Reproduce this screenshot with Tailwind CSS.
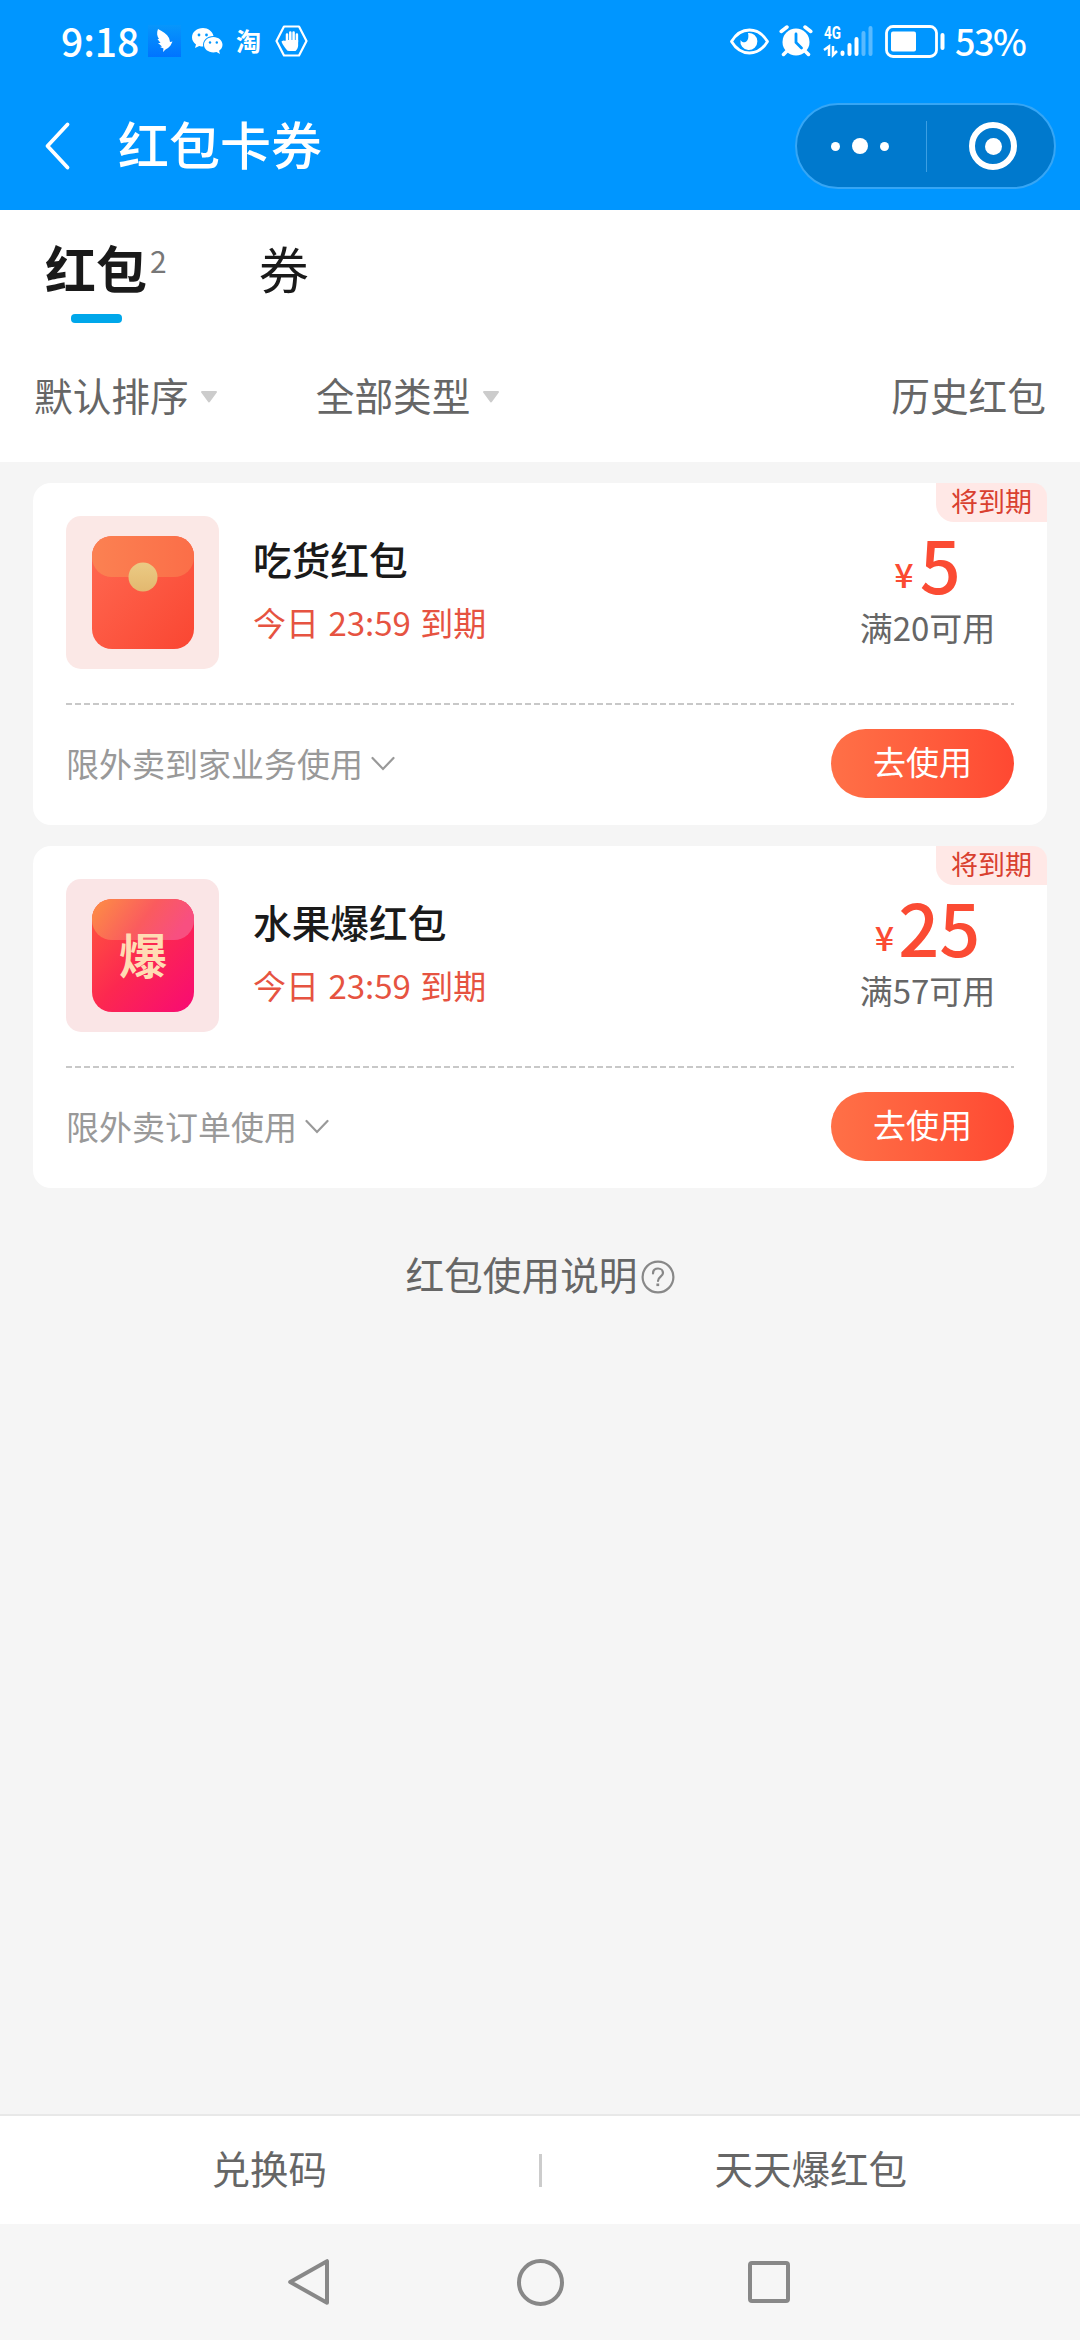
<!DOCTYPE html>
<html lang="zh-CN">
<head>
<meta charset="utf-8">
<title>红包卡券</title>
<script src="https://cdn.jsdelivr.net/npm/@tailwindcss/browser@4"></script>
</head>
<body class="flex h-[2340px] w-[1080px] flex-col overflow-hidden bg-[#f5f5f5] font-['Noto_Sans_CJK_SC',sans-serif] text-[#666]">

<header class="h-[210px] shrink-0 bg-[#0096ff] text-white">
  <!-- Status bar -->
  <div class="flex h-[82px] items-center justify-between pr-[57px] pl-[61px]">
    <div class="flex items-center">
      <span class="w-[87px] pb-[3px] text-[39px] leading-10 font-medium">9:18</span>
      <svg class="h-8 w-[33px]" viewBox="0 0 33 32">
        <defs><linearGradient id="bird" x1="0" y1="0" x2="0" y2="1"><stop offset="0" stop-color="#0796fb"/><stop offset="1" stop-color="#0074ff"/></linearGradient></defs>
        <rect width="33" height="32" fill="url(#bird)"/>
        <path d="M10 4c5 2.500 9 5 11 9 .5 1.500.7 2.500 1 4l2.500-.5-2 4c-1.500 2-3.500 3-5 4L15 27l.5-3.500-3.500-1.500 2-.5-4-3.500h2.500L9.500 14H11c-2-3-2.500-6-1-10z" fill="#fff"/>
      </svg>
      <svg class="ml-[11px] h-[26px] w-[31px]" viewBox="0 0 31 26">
        <path d="M11 0C5 0 0 4 0 9.300c0 3 1.600 5.500 4 7.200L3 20l4.200-2c1.300.4 2.600.5 4 .5C10.300 12.500 15 8 21.500 8 20.500 3.500 16 0 11 0z" fill="#fff"/>
        <path d="M21.500 9C16 9 12 12.600 12 16.800s4 7.700 9.500 7.700c1 0 2-.1 3-.4l3.500 1.900-.9-3.200c2.100-1.400 3.400-3.500 3.400-6C30.500 12.600 26.500 9 21.500 9z" fill="#fff"/>
        <g fill="#0096ff"><circle cx="7" cy="7" r="1.400"/><circle cx="14.500" cy="7" r="1.400"/><circle cx="18" cy="14.500" r="1.200"/><circle cx="24.800" cy="14.500" r="1.200"/></g>
      </svg>
      <span class="ml-[13px] pb-[3px] text-[25px] leading-7 font-bold">淘</span>
      <svg class="ml-[14px] h-8 w-[33px]" viewBox="0 0 33 32">
        <path d="M9 1.500h15L31.500 16 24 30.500H9L1.500 16z" fill="none" stroke="#fff" stroke-width="2.200" stroke-linejoin="round"/>
        <path d="M13 24.500c-2-2.500-4-5-5-7.500 1-.8 2.200 0 4 1.800V9.500M15.300 17V7.500M18.600 17V7.500M21.900 17V9.500" fill="none" stroke="#fff" stroke-width="2.500" stroke-linecap="round"/>
        <path d="M11 15h12.100v5.500c0 2-1 4-2.500 5.500h-7L9 19z" fill="#fff"/>
      </svg>
    </div>
    <div class="flex items-center">
      <svg class="h-[27px] w-[39px]" viewBox="0 0 39 27">
        <path d="M1.500 13.500C6 6 12 2 19.500 2S33 6 37.500 13.500C33 21 27 25 19.500 25S6 21 1.500 13.500z" fill="none" stroke="#fff" stroke-width="2.800" stroke-linejoin="round"/>
        <path d="M18 5a8.500 8.500 0 1 1-7.500 7c1.200 2 3.200 2.800 5 2 2.500-1 3.500-5 2.500-9z" fill="#fff"/>
      </svg>
      <svg class="ml-[10px] h-[32px] w-[34px]" viewBox="0 0 34 32">
        <circle cx="17" cy="17" r="13.500" fill="#fff"/>
        <path d="M2.200 6.500 8 2M31.800 6.500 26 2M7.500 26.500 4.500 29.500M26.500 26.500l3 3" stroke="#fff" stroke-width="3.500" stroke-linecap="round"/>
        <path d="M17 9v8.500l5.500 5.500" fill="none" stroke="#0096ff" stroke-width="2.800" stroke-linecap="round"/>
      </svg>
      <svg class="ml-[10px] h-[32px] w-[51px] overflow-visible font-['Roboto',sans-serif]" viewBox="0 0 51 32">
        <text x="1" y="14" font-size="18" font-weight="700" fill="#fff" textLength="17" lengthAdjust="spacingAndGlyphs">4G</text>
        <path d="M1 25 6 21.500v9.500M10 21v9l4-4" fill="none" stroke="#fff" stroke-width="2.500"/>
        <g stroke="#fff" stroke-width="4" stroke-linecap="round"><path d="M19.500 27.500v1.500M26.500 20v9M33.500 14v15"/><path d="M40.500 8v21M47.500 3v26" opacity=".35"/></g>
      </svg>
      <svg class="ml-[11px] h-[33px] w-[61px]" viewBox="0 0 61 33">
        <rect x="1.500" y="1.500" width="50" height="30" rx="6.500" fill="none" stroke="#fff" stroke-width="2.800"/>
        <rect x="6" y="6.500" width="25" height="20" rx="2" fill="#fff"/>
        <rect x="55.500" y="8" width="4" height="17" rx="2" fill="#fff"/>
      </svg>
      <span class="ml-[9px] w-[68px] pb-[2px] text-[36px] leading-10 font-medium tracking-[-1.500px]">53%</span>
    </div>
  </div>
  <!-- Title bar -->
  <div class="flex h-32 items-center pr-6 pl-11">
    <svg class="h-[50px] w-[27px]" viewBox="0 0 27 50"><path d="M23.500 3.500 3.500 25l20 21.500" fill="none" stroke="#fff" stroke-width="3.800" stroke-linecap="round" stroke-linejoin="round"/></svg>
    <h1 class="ml-[47px] pb-[6px] text-[51px] leading-[60px] font-medium">红包卡券</h1>
    <div class="ml-auto flex h-[86px] w-[261px] items-center rounded-full border-2 border-[#36a6f5] bg-[#0079cd]">
      <div class="flex w-[129px] items-center justify-center gap-3 pr-[3px]">
        <i class="size-[9px] rounded-full bg-white"></i><i class="size-4 rounded-full bg-white"></i><i class="size-[9px] rounded-full bg-white"></i>
      </div>
      <i class="h-[51px] w-px bg-[#3c9fe3]"></i>
      <div class="flex flex-1 justify-center pl-[5px]">
        <div class="flex size-12 items-center justify-center rounded-full border-[6px] border-white"><i class="size-[17px] rounded-full bg-white"></i></div>
      </div>
    </div>
  </div>
</header>

<!-- Tabs and filters -->
<section class="h-[252px] shrink-0 bg-white">
  <nav class="flex h-[113px] items-start pt-[27px] pl-[45px] text-[51px] leading-[60px] text-[#1a1a1a]">
    <div class="w-[102px] font-bold">红包
      <i class="ml-[26px] mt-[17px] block h-[9px] w-[51px] rounded-[4px] bg-[#00a7ea]"></i>
    </div>
    <sup class="top-0 ml-[3px] pt-[4px] text-[30px] leading-[38px] font-normal text-[#777]">2</sup>
    <div class="ml-[92px] text-[50px]">券</div>
  </nav>
  <div class="flex h-[139px] items-center pt-[3px] pr-[34px] pl-[34px] text-[38.700px] leading-[50px]">
    <span>默认排序</span>
    <svg class="mt-[5px] ml-[11px] h-3 w-[18px]" viewBox="0 0 18 12"><path d="M2 1h14L9 10.500z" fill="#ccc" stroke="#ccc" stroke-width="2" stroke-linejoin="round"/></svg>
    <span class="ml-[98px]">全部类型</span>
    <svg class="mt-[5px] ml-[11px] h-3 w-[18px]" viewBox="0 0 18 12"><path d="M2 1h14L9 10.500z" fill="#ccc" stroke="#ccc" stroke-width="2" stroke-linejoin="round"/></svg>
    <span class="ml-auto">历史红包</span>
  </div>
</section>

<main class="flex flex-1 flex-col gap-[21px] px-[33px] pt-[21px]">
  <article class="relative flex h-[342px] flex-col rounded-[18px] bg-white px-[33px]">
    <span class="absolute top-0 right-0 h-[39px] w-[111px] rounded-tr-[14px] rounded-bl-[18px] bg-[#ffe8e6] pl-[15px] text-[27px] leading-[35px] text-[#d9402f]">将到期</span>
    <div class="flex h-[220px] pt-[33px]">
      <div class="flex size-[153px] items-center justify-center rounded-[15px] bg-[#fbe8e6]">
        <svg class="h-[113px] w-[102px]" viewBox="0 0 102 113">
          <defs>
            <linearGradient id="redBody" x1="0" y1="0" x2="1" y2="1"><stop offset="0" stop-color="#ff6a52"/><stop offset="1" stop-color="#fa4632"/></linearGradient>
            <linearGradient id="redFlap" x1="0" y1="0" x2="1" y2="0"><stop offset="0" stop-color="#fb8152"/><stop offset="1" stop-color="#fb6e48"/></linearGradient>
            <linearGradient id="gold" x1="0" y1="0" x2="0" y2="1"><stop offset="0" stop-color="#ebcb84"/><stop offset="1" stop-color="#e3b86f"/></linearGradient>
          </defs>
          <rect width="102" height="113" rx="20" fill="url(#redBody)"/>
          <rect width="102" height="41" rx="20" fill="url(#redFlap)"/>
          <circle cx="51" cy="41" r="14.500" fill="url(#gold)"/>
        </svg>
      </div>
      <div class="pt-[22px] pl-[34px]">
        <h2 class="text-[38.700px] leading-10 font-medium text-[#1a1a1a]">吃货红包</h2>
        <p class="mt-6 text-[33px] leading-10 text-[#e65341] [word-spacing:2px]">今日 23:59 到期</p>
      </div>
      <div class="mt-[17px] ml-auto flex w-[173px] flex-col items-center">
        <p class="flex h-[60px] items-start gap-[6px] text-[#fb4b33]"><span class="mt-[21px] text-[34px] leading-10 font-medium">¥</span><span class="text-[72px] leading-[60px] font-medium">5</span></p>
        <p class="mt-[14px] text-[33px] leading-10 whitespace-nowrap">满20可用</p>
      </div>
    </div>
    <div class="h-0.5 bg-[repeating-linear-gradient(90deg,#c8c8c8_0_6px,transparent_6px_9px)]"></div>
    <div class="flex flex-1 items-center pb-[3px]">
      <span class="pb-[2px] text-[33px] leading-10 text-[#999]">限外卖到家业务使用</span>
      <svg class="ml-[8px] h-[15px] w-[24px]" viewBox="0 0 24 15"><path d="m1.500 2 10.500 11L22.500 2" fill="none" stroke="#999" stroke-width="2.200" stroke-linecap="round"/></svg>
      <button class="ml-auto h-[69px] w-[183px] rounded-full bg-linear-to-r from-[#ff7047] to-[#ff4832] pb-[6px] text-[33px] leading-10 text-white">去使用</button>
    </div>
  </article>

  <article class="relative flex h-[342px] flex-col rounded-[18px] bg-white px-[33px]">
    <span class="absolute top-0 right-0 h-[39px] w-[111px] rounded-tr-[14px] rounded-bl-[18px] bg-[#ffe8e6] pl-[15px] text-[27px] leading-[35px] text-[#d9402f]">将到期</span>
    <div class="flex h-[220px] pt-[33px]">
      <div class="flex size-[153px] items-center justify-center rounded-[15px] bg-[#fae5e6]">
        <svg class="h-[113px] w-[102px]" viewBox="0 0 102 113">
          <defs>
            <linearGradient id="pinkBody" x1="0" y1="0" x2="1" y2="1"><stop offset="0" stop-color="#ff5a3c"/><stop offset=".5" stop-color="#fc2850"/><stop offset="1" stop-color="#f80a74"/></linearGradient>
            <linearGradient id="pinkFlap" x1="0" y1="0" x2="1" y2=".3"><stop offset="0" stop-color="#fd9044"/><stop offset=".6" stop-color="#fa5b5e"/><stop offset="1" stop-color="#f84f80"/></linearGradient>
          </defs>
          <rect width="102" height="113" rx="20" fill="url(#pinkBody)"/>
          <rect width="102" height="41" rx="20" fill="url(#pinkFlap)"/>
          <text x="51" y="75" text-anchor="middle" font-size="48" font-weight="700" fill="#ffdcb4">爆</text>
        </svg>
      </div>
      <div class="pt-[22px] pl-[34px]">
        <h2 class="text-[38.700px] leading-10 font-medium text-[#1a1a1a]">水果爆红包</h2>
        <p class="mt-6 text-[33px] leading-10 text-[#e65341] [word-spacing:2px]">今日 23:59 到期</p>
      </div>
      <div class="mt-[17px] ml-auto flex w-[173px] flex-col items-center">
        <p class="flex h-[60px] items-start gap-[4px] text-[#fb4b33]"><span class="mt-[21px] text-[34px] leading-10 font-medium">¥</span><span class="text-[72px] leading-[60px] font-medium">25</span></p>
        <p class="mt-[14px] text-[33px] leading-10 whitespace-nowrap">满57可用</p>
      </div>
    </div>
    <div class="h-0.5 bg-[repeating-linear-gradient(90deg,#c8c8c8_0_6px,transparent_6px_9px)]"></div>
    <div class="flex flex-1 items-center pb-[3px]">
      <span class="pb-[2px] text-[33px] leading-10 text-[#999]">限外卖订单使用</span>
      <svg class="ml-[8px] h-[15px] w-[24px]" viewBox="0 0 24 15"><path d="m1.500 2 10.500 11L22.500 2" fill="none" stroke="#999" stroke-width="2.200" stroke-linecap="round"/></svg>
      <button class="ml-auto h-[69px] w-[183px] rounded-full bg-linear-to-r from-[#ff7047] to-[#ff4832] pb-[6px] text-[33px] leading-10 text-white">去使用</button>
    </div>
  </article>

  <div class="mt-[38px] flex items-center justify-center text-[38.700px] leading-[52px]">
    <span>红包使用说明</span>
    <svg class="mt-[7px] ml-[3px] size-[34px]" viewBox="0 0 34 34" fill="none" stroke="#888" stroke-width="2.200">
      <circle cx="17" cy="17" r="15.400"/><path d="M12 13.500c0-3 2-5 5-5s5 1.900 5 4.500c0 3.500-5 4-5 8" stroke-linecap="round"/><path d="M16.800 23.500v2.600" stroke-width="2.800"/>
    </svg>
  </div>
</main>

<!-- Bottom actions -->
<footer class="shrink-0">
  <div class="flex h-[110px] items-center border-t-2 border-[#e8e8e8] bg-white text-center text-[38.500px] leading-[50px]">
    <span class="flex-1 pb-[7px]">兑换码</span>
    <i class="h-[33px] w-[3px] bg-[#ccc]"></i>
    <span class="flex-1 pb-[7px]">天天爆红包</span>
  </div>
  <div class="flex h-[116px] items-center bg-[#f6f6f6] pl-[287px]">
    <svg class="h-12 w-[43px]" viewBox="0 0 43 48"><path d="M40 3.200v41.600L3.200 24z" fill="none" stroke="#888" stroke-width="4" stroke-linejoin="round"/></svg>
    <i class="ml-[187px] size-[47px] rounded-full border-4 border-[#888]"></i>
    <i class="ml-[184px] size-[42px] rounded-[4px] border-4 border-[#888]"></i>
  </div>
</footer>
</body>
</html>
